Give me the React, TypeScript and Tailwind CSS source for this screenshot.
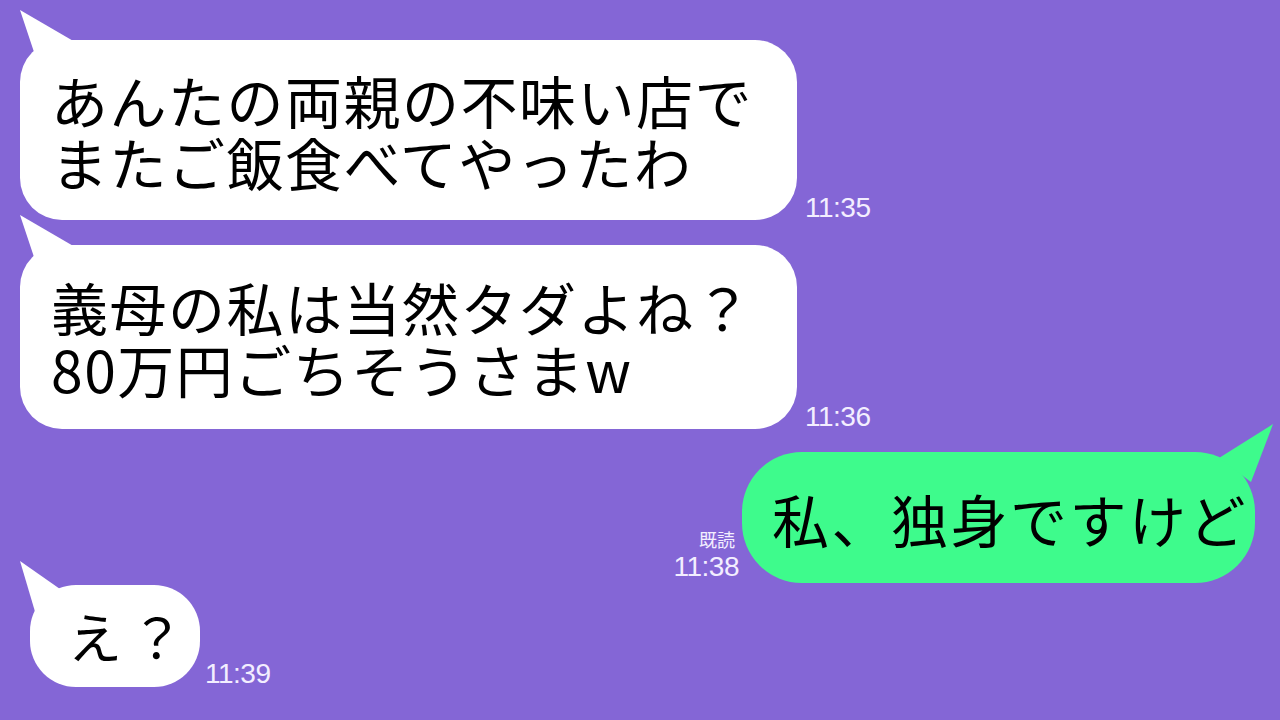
const font = "font-['Noto_Sans_CJK_JP','Noto_Sans',sans-serif]"

function TailLeft() {
  return (
    <svg
      className="absolute left-0 top-[-32px]"
      width="70"
      height="70"
      viewBox="0 0 70 70"
    >
      <polygon points="0,2 55,34 20,62" fill="#ffffff" />
    </svg>
  )
}

function TailRight() {
  return (
    <svg
      className="absolute right-[-20px] top-[-30px]"
      width="70"
      height="70"
      viewBox="0 0 70 70"
    >
      <polygon points="68,2 14,36 46,60" fill="#3efb8c" />
    </svg>
  )
}

function Time({ t, read }: { t: string; read?: boolean }) {
  return (
    <div className="flex flex-col items-end text-[#f3eeff] font-['Liberation_Sans','Noto_Sans_CJK_JP',sans-serif]">
      {read && <span className={`mr-[4px] mb-[3px] text-[18px] leading-[20px] ${font}`}>既読</span>}
      <span className="text-[28px] leading-[30px] tracking-[-0.5px]">{t}</span>
    </div>
  )
}

export default function App() {
  return (
    <div className={`w-[1280px] h-[720px] overflow-hidden bg-[#8466d6] ${font}`}>
      <div className="flex flex-col pt-[40px]">
        <div className="flex items-end">
          <div className="relative ml-[20px] w-[777px] h-[180px] rounded-[42px] bg-white flex items-center pl-[31px] text-[57px] leading-[62px] text-black tracking-[1.5px]">
            <TailLeft />
            <p className="relative">
              あんたの両親の不味い店で
              <br />
              またご飯食べてやったわ
            </p>
          </div>
          <div className="ml-[8px] mb-[-3px]">
            <Time t="11:35" />
          </div>
        </div>

        <div className="flex items-end mt-[25px]">
          <div className="relative ml-[20px] w-[777px] h-[184px] rounded-[42px] bg-white flex items-center pl-[31px] text-[57px] leading-[62px] text-black tracking-[1.5px]">
            <TailLeft />
            <p className="relative">
              義母の私は当然タダよね？
              <br />
              80万円ごちそうさまw
            </p>
          </div>
          <div className="ml-[8px] mb-[-3px]">
            <Time t="11:36" />
          </div>
        </div>

        <div className="flex items-end justify-end mt-[23px] mr-[25px]">
          <div className="mr-[3px] mb-[1px]">
            <Time t="11:38" read />
          </div>
          <div className="relative w-[513px] h-[131px] rounded-[60px] bg-[#3efb8c] flex items-center pl-[30px] text-[57px] leading-[62px] text-black tracking-[2.5px]">
            <TailRight />
            <span className="relative">私、独身ですけど</span>
          </div>
        </div>

        <div className="flex items-end mt-[2px]">
          <div className="relative ml-[30px] w-[170px] h-[102px] rounded-[46px] bg-white flex items-center pl-[38px] text-[54px] leading-[62px] text-black tracking-[8px]">
            <svg
              className="absolute left-[-10px] top-[-24px]"
              width="60"
              height="60"
              viewBox="0 0 60 60"
            >
              <polygon points="0,0 40,28 16,54" fill="#ffffff" />
            </svg>
            <span className="relative">え？</span>
          </div>
          <div className="ml-[5px] mb-[-2px]">
            <Time t="11:39" />
          </div>
        </div>
      </div>
    </div>
  )
}
